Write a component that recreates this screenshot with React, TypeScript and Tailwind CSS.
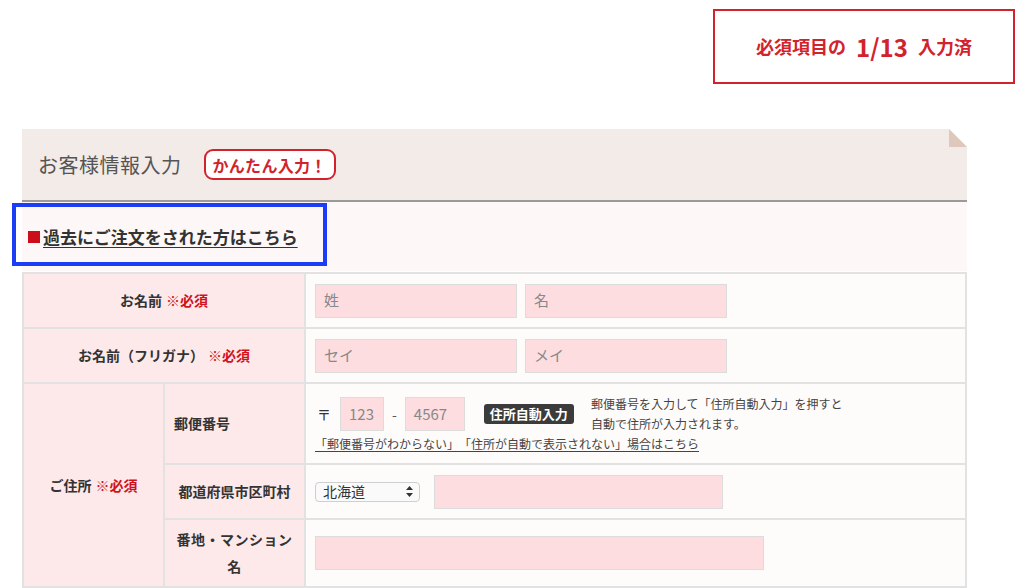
import React from 'react';

const font = { fontFamily: '"Noto Sans CJK JP", "Noto Sans", sans-serif' };

const Required = () => <span className="text-[#d0121b] ml-1">※必須</span>;

const Field = ({ w, placeholder }: { w: string; placeholder?: string }) => (
  <div
    className={`${w} h-[34px] bg-[#fddde0] border border-[#dcdcdc] flex items-center px-2 text-[15px] text-[#888]`}
  >
    {placeholder}
  </div>
);

const App = () => {
  return (
    <div className="w-[1024px] h-[588px] bg-white overflow-hidden text-[#333] [text-spacing-trim:space-all]" style={font}>
      <div className="flex justify-end pt-[9px] pr-[9px]">
        <div className="w-[302px] h-[75px] border-2 border-[#d2232d] flex items-center justify-center font-bold text-[#d2232d]">
          <span className="text-[18px]">必須項目の</span>
          <span className="text-[24px] mx-[10px] leading-none">1/13</span>
          <span className="text-[18px]">入力済</span>
        </div>
      </div>

      <div className="ml-[22px] w-[945px] mt-[45px]">
        {/* header */}
        <div className="relative h-[73px] bg-[#f2ebe7] border-b-2 border-[#9a9a9a] flex items-center pl-[16px]">
          <h1 className="text-[20px] text-[#555] font-normal tracking-[0.5px]">お客様情報入力</h1>
          <span className="ml-[22px] h-[31px] px-[7px] border-2 border-[#d2232d] rounded-[9px] bg-white text-[#d2232d] font-bold text-[16px] tracking-[0.3px] flex items-center">
            かんたん入力！
          </span>
          <svg className="absolute top-0 right-0" width="18" height="18" viewBox="0 0 18 18">
            <polygon points="0,0 18,0 18,18" fill="#ffffff" />
            <polygon points="0,0 18,18 0,18" fill="#dec8bc" />
          </svg>
        </div>

        {/* previous order link */}
        <div className="relative h-[69px] bg-[#fdf8f7] flex items-center pl-[6px]">
          <div className="absolute left-[-10px] top-[1px] w-[315px] h-[63px] border-[4px] border-[#1d3cf5]" />
          <span className="w-[12px] h-[12px] bg-[#cc0e1b] mr-[3px]" />
          <a className="text-[17px] font-bold underline underline-offset-[3px] text-[#333]">過去にご注文をされた方はこちら</a>
        </div>

        {/* form table */}
        <table className="w-[945px] border-collapse table-fixed mt-[1px] text-[14px]">
          <colgroup>
            <col className="w-[141px]" />
            <col className="w-[141px]" />
            <col />
          </colgroup>
          <tbody>
            <tr className="h-[55px]">
              <th colSpan={2} className="bg-[#fde9ea] border-2 border-[#e2e2e2] font-bold text-[#333]">
                お名前<Required />
              </th>
              <td className="bg-[#fefbfb] border-2 border-[#e2e2e2] px-[9px]">
                <div className="flex gap-[8px]">
                  <Field w="w-[202px]" placeholder="姓" />
                  <Field w="w-[202px]" placeholder="名" />
                </div>
              </td>
            </tr>
            <tr className="h-[55px]">
              <th colSpan={2} className="bg-[#fde9ea] border-2 border-[#e2e2e2] font-bold text-[#333]">
                お名前（フリガナ）<Required />
              </th>
              <td className="bg-[#fefbfb] border-2 border-[#e2e2e2] px-[9px]">
                <div className="flex gap-[8px]">
                  <Field w="w-[202px]" placeholder="セイ" />
                  <Field w="w-[202px]" placeholder="メイ" />
                </div>
              </td>
            </tr>
            <tr className="h-[81px]">
              <th rowSpan={3} className="bg-[#fde9ea] border-2 border-[#e2e2e2] font-bold text-[#333]">
                ご住所<Required />
              </th>
              <th className="bg-[#fde9ea] border-2 border-[#e2e2e2] font-bold text-[#333] text-left pl-[9px]">
                郵便番号
              </th>
              <td className="bg-[#fefbfb] border-2 border-[#e2e2e2] px-[9px]">
                <div className="flex items-center">
                  <span className="text-[14px] text-[#333] ml-[2px] mr-[9px]">〒</span>
                  <Field w="w-[44px]" placeholder="123" />
                  <span className="mx-[8px] text-[#555]">-</span>
                  <Field w="w-[60px]" placeholder="4567" />
                  <span className="ml-[19px] h-[20px] px-[6px] bg-[#3b3b3b] rounded-[3px] text-white font-bold text-[13px] flex items-center">
                    住所自動入力
                  </span>
                  <div className="ml-[17px] text-[12px] leading-[20px] text-[#444]">
                    <div>郵便番号を入力して「住所自動入力」を押すと</div>
                    <div>自動で住所が入力されます。</div>
                  </div>
                </div>
                <a className="block mt-[1px] text-[12px] text-[#444] underline underline-offset-2">
                  「郵便番号がわからない」「住所が自動で表示されない」場合はこちら
                </a>
              </td>
            </tr>
            <tr className="h-[55px]">
              <th className="bg-[#fde9ea] border-2 border-[#e2e2e2] font-bold text-[#333]">都道府県市区町村</th>
              <td className="bg-[#fefbfb] border-2 border-[#e2e2e2] px-[9px]">
                <div className="flex items-center gap-[14px]">
                  <div className="w-[105px] h-[20px] border border-[#cfcfcf] rounded-[4px] bg-[#fafafa] flex items-center justify-between pl-[7px] pr-[6px] text-[14px] text-[#333]">
                    <span>北海道</span>
                    <svg width="7" height="11" viewBox="0 0 7 11">
                      <polygon points="3.5,0 7,4 0,4" fill="#333" />
                      <polygon points="0,7 7,7 3.5,11" fill="#333" />
                    </svg>
                  </div>
                  <Field w="w-[289px]" />
                </div>
              </td>
            </tr>
            <tr className="h-[68px]">
              <th className="bg-[#fde9ea] border-2 border-[#e2e2e2] font-bold text-[#333] leading-[27px] px-[8px] tracking-[0.5px]">
                番地・マンション
                <br />
                名
              </th>
              <td className="bg-[#fefbfb] border-2 border-[#e2e2e2] px-[9px]">
                <Field w="w-[449px]" />
              </td>
            </tr>
          </tbody>
        </table>
      </div>
    </div>
  );
};

export default App;
